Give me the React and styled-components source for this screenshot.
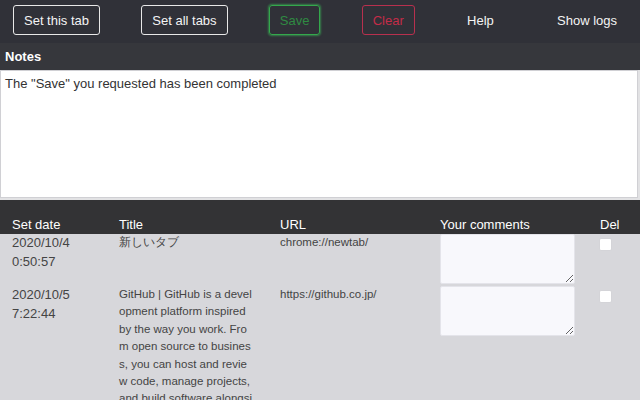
import styled, { createGlobalStyle, css } from 'styled-components';

const GlobalStyle = createGlobalStyle`
  html, body {
    margin: 0;
    padding: 0;
    background: #d7d7db;
    font-family: "Liberation Sans", Arial, sans-serif;
    overflow: hidden;
  }
  * {
    box-sizing: border-box;
  }
`;

const logs = [
  {
    date: ['2020/10/4', '0:50:57'],
    title: '新しいタブ',
    url: 'chrome://newtab/',
  },
  {
    date: ['2020/10/5', '7:22:44'],
    title:
      'GitHub | GitHub is a development platform inspired by the way you work. From open source to business, you can host and review code, manage projects, and build software alongside 50 million developers.',
    url: 'https://github.co.jp/',
  },
];

const App = () => {
  return (
    <Page>
      <GlobalStyle />
      <Toolbar>
        <ToolButton>Set this tab</ToolButton>
        <ToolButton>Set all tabs</ToolButton>
        <ToolButton $variant="save">Save</ToolButton>
        <ToolButton $variant="clear">Clear</ToolButton>
        <ToolButton $variant="plain">Help</ToolButton>
        <ToolButton $variant="plain">Show logs</ToolButton>
      </Toolbar>

      <NotesBar>Notes</NotesBar>
      <NotesWrap>
        <NotesArea
          readOnly
          value={'The "Save" you requested has been completed'}
        />
      </NotesWrap>

      <TableHead>
        <span>Set date</span>
        <span>Title</span>
        <span>URL</span>
        <span>Your comments</span>
        <span>Del</span>
      </TableHead>

      {logs.map((log, i) => (
        <Row key={i}>
          <DateCell>
            {log.date[0]}
            <br />
            {log.date[1]}
          </DateCell>
          <TitleCell>{log.title}</TitleCell>
          <UrlCell>{log.url}</UrlCell>
          <div>
            <Comment />
          </div>
          <div>
            <DelBox type="checkbox" />
          </div>
        </Row>
      ))}
    </Page>
  );
};

const Page = styled.div`
  width: 640px;
  height: 400px;
  overflow: hidden;
`;

const Toolbar = styled.div`
  display: flex;
  align-items: flex-start;
  justify-content: space-between;
  height: 43px;
  padding: 5px 12px 0 13px;
  background: #303138;
`;

const ToolButton = styled.button`
  height: 30px;
  padding: 0 10px;
  border: 1px solid #e8e8e8;
  border-radius: 3px;
  background: transparent;
  color: #f4f4f4;
  font-family: "Liberation Sans", Arial, sans-serif;
  font-size: 13px;
  cursor: pointer;

  ${(p) =>
    p.$variant === 'save' &&
    css`
      border: 1px solid #34a84c;
      color: #2f8a42;
      box-shadow: 0 0 2px 1px rgba(60, 190, 90, 0.55);
    `}

  ${(p) =>
    p.$variant === 'clear' &&
    css`
      border-color: #b8304e;
      color: #c42c48;
    `}

  ${(p) =>
    p.$variant === 'plain' &&
    css`
      border-color: transparent;
    `}
`;

const NotesBar = styled.div`
  height: 27px;
  line-height: 27px;
  padding-left: 5px;
  background: #36373c;
  color: #fff;
  font-size: 13px;
  font-weight: bold;
`;

const NotesWrap = styled.div`
  padding: 0 2px 2px 0;
  background: #e2e2e4;
`;

const NotesArea = styled.textarea`
  display: block;
  width: 100%;
  height: 128px;
  margin: 0;
  padding: 5px 4px;
  border: 1px solid #d0d0d4;
  background: #fff;
  color: #333;
  font-family: "Liberation Sans", Arial, sans-serif;
  font-size: 13px;
  line-height: 16px;
  resize: none;
  outline: none;
`;

const grid = css`
  display: grid;
  grid-template-columns: 107px 161px 160px 160px 1fr;
  padding-left: 12px;
`;

const TableHead = styled.div`
  ${grid};
  align-items: end;
  height: 34px;
  padding-bottom: 1px;
  background: #333335;
  color: #fff;
  font-size: 13px;
  line-height: 16px;
`;

const Row = styled.div`
  ${grid};
  align-items: start;
  color: #444;
`;

const DateCell = styled.div`
  font-size: 13px;
  line-height: 18.5px;
`;

const TitleCell = styled.div`
  width: 134.5px;
  font-size: 11.5px;
  line-height: 17.4px;
  word-break: break-all;
`;

const UrlCell = styled.div`
  font-size: 11.5px;
  line-height: 17.4px;
`;

const Comment = styled.textarea`
  display: block;
  width: 135px;
  height: 50px;
  margin: 0 0 2px;
  padding: 2px;
  border: 1px solid #e4e4ea;
  border-radius: 2px;
  background: #f8f8fc;
  font-family: "Liberation Sans", Arial, sans-serif;
`;

const DelBox = styled.input`
  appearance: none;
  display: block;
  width: 13px;
  height: 13px;
  margin: 4px 0 0 -1px;
  border: 1px solid #d4d4d8;
  border-radius: 2px;
  background: #fff;
`;

export default App;
